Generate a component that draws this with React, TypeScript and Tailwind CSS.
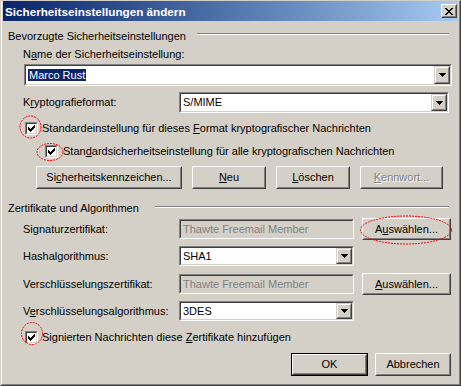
import React from "react";

type BoxProps = { className?: string; inner?: string; children?: React.ReactNode };

// sunken 3d field (edit, combo, checkbox)
function Sunken({ className = "", inner = "bg-white", children }: BoxProps) {
  return (
    <div className={`border border-t-[#808080] border-l-[#808080] border-r-white border-b-white ${className}`}>
      <div className={`h-full border border-t-[#404040] border-l-[#404040] border-r-[#d4d0c8] border-b-[#d4d0c8] flex items-center ${inner}`}>
        {children}
      </div>
    </div>
  );
}

// push button look
function Raised({ className = "", children }: BoxProps) {
  return (
    <div className={`border border-t-white border-l-white border-r-[#404040] border-b-[#404040] ${className}`}>
      <div className="h-full border border-t-[#d4d0c8] border-l-[#d4d0c8] border-r-[#808080] border-b-[#808080] flex items-center justify-center">
        {children}
      </div>
    </div>
  );
}

function Arrow() {
  return (
    <div className="h-full w-[16px] border border-t-[#d4d0c8] border-l-[#d4d0c8] border-r-[#404040] border-b-[#404040]">
      <div className="h-full border border-t-white border-l-white border-r-[#808080] border-b-[#808080] bg-[#d4d0c8] flex items-center justify-center">
        <svg width="7" height="4" shapeRendering="crispEdges">
          <rect x="0" y="0" width="7" height="1" fill="#000" />
          <rect x="1" y="1" width="5" height="1" fill="#000" />
          <rect x="2" y="2" width="3" height="1" fill="#000" />
          <rect x="3" y="3" width="1" height="1" fill="#000" />
        </svg>
      </div>
    </div>
  );
}

function Check() {
  return (
    <Sunken className="w-[13px] h-[13px] shrink-0" inner="bg-white justify-center">
      <svg width="7" height="7" shapeRendering="crispEdges">
        <rect x="6" y="0" width="1" height="1" fill="#000" />
        <rect x="5" y="1" width="2" height="1" fill="#000" />
        <rect x="0" y="2" width="1" height="1" fill="#000" />
        <rect x="4" y="2" width="3" height="1" fill="#000" />
        <rect x="0" y="3" width="2" height="1" fill="#000" />
        <rect x="3" y="3" width="3" height="1" fill="#000" />
        <rect x="0" y="4" width="5" height="1" fill="#000" />
        <rect x="1" y="5" width="3" height="1" fill="#000" />
        <rect x="2" y="6" width="1" height="1" fill="#000" />
      </svg>
    </Sunken>
  );
}

function Combo({ className = "", children }: BoxProps) {
  return (
    <Sunken className={className} inner="bg-white">
      <div className="flex-1 pl-[2px] leading-[13px]">{children}</div>
      <Arrow />
    </Sunken>
  );
}

function Disabled({ className = "", children }: BoxProps) {
  return (
    <Sunken className={className} inner="bg-[#d4d0c8]">
      <span className="pl-[2px] text-[#808080]">{children}</span>
    </Sunken>
  );
}

function Separator({ className = "" }: { className?: string }) {
  return <div className={`h-[2px] border-t border-t-[#808080] border-b border-b-white self-start ${className}`} />;
}

const U = ({ children }: { children: React.ReactNode }) => (
  <span className="underline underline-offset-[1px]">{children}</span>
);

export default function App() {
  return (
    <div className="relative w-[461px] h-[386px] overflow-hidden font-['Liberation_Sans',Arial,sans-serif] text-[11px] leading-[13px] text-black select-none">
      <div className="w-full h-full border-t border-l border-t-[#d4d0c8] border-l-[#d4d0c8] border-r border-b border-r-[#404040] border-b-[#404040]">
        <div className="h-full flex flex-col bg-[#d4d0c8] border-l border-l-white border-r border-r-[#808080] border-b border-b-[#808080] px-px pb-px">
          {/* title bar */}
          <div className="h-[20px] shrink-0 flex items-center bg-linear-to-r from-[#0a246a] to-[#a6caf0] pl-[2px] pr-px">
            <span className="font-bold text-white text-[11.7px]">Sicherheitseinstellungen ändern</span>
            <Raised className="ml-auto w-[16px] h-[14px] bg-[#d4d0c8]">
              <svg width="8" height="7" shapeRendering="crispEdges">
                <rect x="0" y="0" width="2" height="1" fill="#000" />
                <rect x="6" y="0" width="2" height="1" fill="#000" />
                <rect x="1" y="1" width="2" height="1" fill="#000" />
                <rect x="5" y="1" width="2" height="1" fill="#000" />
                <rect x="2" y="2" width="4" height="1" fill="#000" />
                <rect x="3" y="3" width="2" height="1" fill="#000" />
                <rect x="2" y="4" width="4" height="1" fill="#000" />
                <rect x="1" y="5" width="2" height="1" fill="#000" />
                <rect x="5" y="5" width="2" height="1" fill="#000" />
                <rect x="0" y="6" width="2" height="1" fill="#000" />
                <rect x="6" y="6" width="2" height="1" fill="#000" />
              </svg>
            </Raised>
          </div>

          {/* Bevorzugte Sicherheitseinstellungen */}
          <div className="mt-[8px] h-[14px] flex items-center pl-[5px] pr-[9px]">
            <span>Bevorzugte Sicherheitseinstellungen</span>
            <Separator className="ml-auto w-[252px] mt-[4px]" />
          </div>
          <div className="mt-[5px] h-[13px] flex items-center pl-[20px]">
            <span>
              N<U>a</U>me der Sicherheitseinstellung:
            </span>
          </div>
          <div className="mt-[3px] h-[22px] flex pl-[21px]">
            <Combo className="w-[428px] h-full">
              <span className="bg-[#0a246a] text-white px-px">Marco Rust</span>
            </Combo>
          </div>
          <div className="mt-[6px] h-[21px] flex items-center pl-[20px]">
            <span className="w-[156px]">
              K<U>r</U>yptografieformat:
            </span>
            <Combo className="w-[270px] h-full">S/MIME</Combo>
          </div>
          <div className="mt-[8px] h-[14px] flex items-center pl-[22px]">
            <Check />
            <span className="ml-[4px]">
              Standardeinstellung für dieses <U>F</U>ormat kryptografischer Nachrichten
            </span>
          </div>
          <div className="mt-[9px] h-[14px] flex items-center pl-[42px]">
            <Check />
            <span className="ml-[5px]">
              Stan<U>d</U>ardsicherheitseinstellung für alle kryptografischen Nachrichten
            </span>
          </div>
          <div className="mt-[8px] h-[23px] flex gap-[10px] pl-[33px]">
            <Raised className="w-[146px] h-full">
              <span>
                Si<U>c</U>herheitskennzeichen...
              </span>
            </Raised>
            <Raised className="w-[74px] h-full">
              <span>
                <U>N</U>eu
              </span>
            </Raised>
            <Raised className="w-[74px] h-full">
              <span>
                <U>L</U>öschen
              </span>
            </Raised>
            <Raised className="w-[83px] h-full">
              <span className="text-[#808080] [text-shadow:1px_1px_0_#fff]">
                <U>K</U>ennwort...
              </span>
            </Raised>
          </div>

          {/* Zertifikate und Algorithmen */}
          <div className="mt-[12px] h-[14px] flex items-center pl-[5px] pr-[9px]">
            <span>Zertifikate und Algorithmen</span>
            <Separator className="ml-auto w-[294px] mt-[5px]" />
          </div>
          <div className="mt-[3px] h-[22px] flex items-center pl-[20px]">
            <span className="w-[156px]">Signaturzertifikat:</span>
            <Disabled className="w-[175px] h-[20px]">Thawte Freemail Member</Disabled>
            <Raised className="ml-[8px] w-[89px] h-full">
              <span>
                A<U>u</U>swählen...
              </span>
            </Raised>
          </div>
          <div className="mt-[6px] h-[20px] flex items-center pl-[20px]">
            <span className="w-[156px]">
              Hashal<U>g</U>orithmus:
            </span>
            <Combo className="w-[175px] h-full">SHA1</Combo>
          </div>
          <div className="mt-[7px] h-[22px] flex items-center pl-[20px]">
            <span className="w-[156px]">Verschlüsselungszertifikat:</span>
            <Disabled className="w-[175px] h-[20px]">Thawte Freemail Member</Disabled>
            <Raised className="ml-[8px] w-[89px] h-full">
              <span>
                <U>A</U>uswählen...
              </span>
            </Raised>
          </div>
          <div className="mt-[6px] h-[20px] flex items-center pl-[20px]">
            <span className="w-[156px]">
              V<U>e</U>rschlüsselungsalgorithmus:
            </span>
            <Combo className="w-[175px] h-full">3DES</Combo>
          </div>
          <div className="mt-[9px] h-[14px] flex items-center pl-[22px]">
            <Check />
            <span className="ml-[4px]">
              Signierten Nachrichten diese <U>Z</U>ertifikate hinzufügen
            </span>
          </div>

          {/* dialog buttons */}
          <div className="mt-[9px] h-[23px] flex justify-end gap-[7px] pr-[7px]">
            <div className="w-[77px] h-full border border-black">
              <Raised className="w-full h-full">
                <span>OK</span>
              </Raised>
            </div>
            <Raised className="w-[76px] h-full">
              <span>Abbrechen</span>
            </Raised>
          </div>
        </div>
      </div>

      {/* red annotation ellipses */}
      <svg className="absolute left-0 top-0 pointer-events-none" width="461" height="386">
        <g fill="none" stroke="#ff0000" strokeWidth="1" strokeDasharray="2 1">
          <ellipse cx="30.5" cy="127" rx="10.5" ry="11" />
          <ellipse cx="50" cy="152" rx="13" ry="8.5" />
          <ellipse cx="406" cy="230" rx="45.5" ry="14" />
          <ellipse cx="32" cy="333.5" rx="10.5" ry="11" />
        </g>
      </svg>
    </div>
  );
}
